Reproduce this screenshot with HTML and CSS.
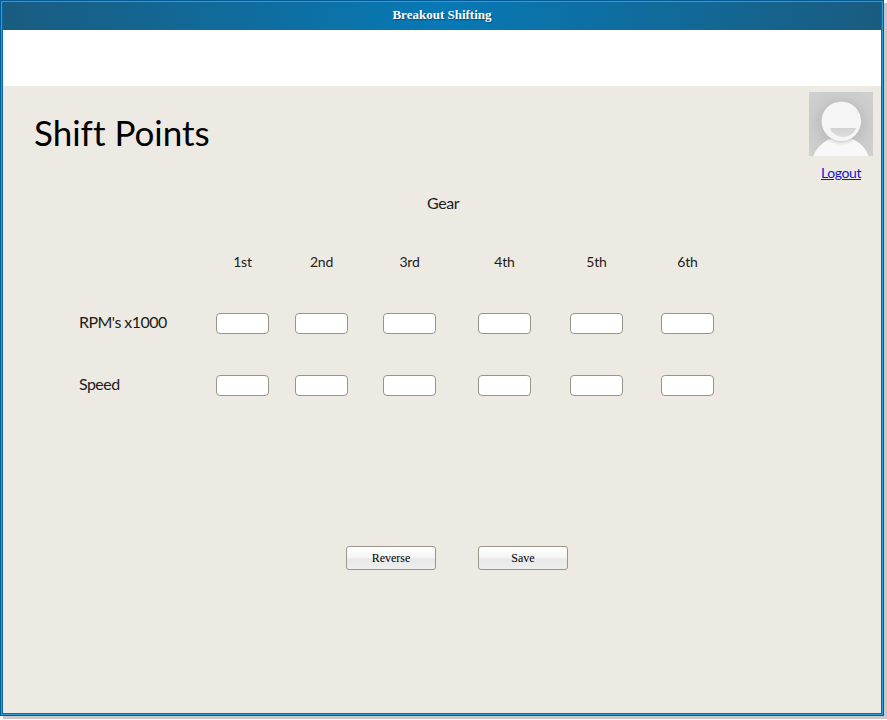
FILE: index.html
```html
<!DOCTYPE html>
<html lang="en">
<head>
<meta charset="utf-8">
<title>Breakout Shifting</title>
<link rel="stylesheet" href="styles.css">
</head>
<body>
<div class="window">
  <div class="frame">
    <header class="titlebar">Breakout Shifting</header>
    <div class="toolbar"></div>
    <main class="content">
      <div class="top">
        <h1>Shift Points</h1>
        <div class="user">
          <svg class="avatar" viewBox="0 0 64 64" aria-hidden="true">
            <defs>
              <radialGradient id="bg" cx=".5" cy=".5" r=".65"><stop offset=".4" stop-color="#bdbdbd"/><stop offset=".7" stop-color="#cbcbcb"/><stop offset="1" stop-color="#d0d0d0"/></radialGradient>
              <linearGradient id="mouth" x1="0" y1="0" x2="0" y2="1"><stop offset="0" stop-color="#d2d2d2"/><stop offset="1" stop-color="#dedede"/></linearGradient>
              <radialGradient id="halo"><stop offset=".82" stop-color="#bbb" stop-opacity=".6"/><stop offset="1" stop-color="#ccc" stop-opacity="0"/></radialGradient>
            </defs>
            <rect width="64" height="64" fill="url(#bg)"/>
            <path d="M4.500 64C8 53 19 45 32 45s24 8 27.500 19z" fill="#f8f8f8"/>
            <circle cx="32.300" cy="29.500" r="24" fill="url(#halo)"/>
            <circle cx="32.300" cy="29.200" r="19.800" fill="#f5f5f5"/>
            <path d="M21 36h26c-2 5.500-7 9-13 9s-11-3.500-13-9z" fill="url(#mouth)"/>
          </svg>
          <a href="#">Logout</a>
        </div>
      </div>
      <div class="caption">Gear</div>
      <div class="grid">
        <span></span><span class="gear">1st</span><span class="gear">2nd</span><span class="gear">3rd</span><span class="gear">4th</span><span class="gear">5th</span><span class="gear">6th</span>
        <span class="label">RPM's x1000</span><input type="text"><input type="text"><input type="text"><input type="text"><input type="text"><input type="text">
        <span class="label">Speed</span><input type="text"><input type="text"><input type="text"><input type="text"><input type="text"><input type="text">
      </div>
      <div class="actions"><button>Reverse</button><button>Save</button></div>
    </main>
  </div>
</div>
</body>
</html>
```
FILE: styles.css
```css
* { box-sizing: border-box; }
body { margin: 0; height: 720px; overflow: hidden; background: #fff; font-family: Lato, sans-serif; color: #1c1c1c; font-variant-ligatures: none; }
.window { width: 884px; height: 716px; border: 1px solid #005b97; box-shadow: 3px 3px 0 #c9c7c9; }
.frame { height: 714px; border: 1px solid #2f9ad8; }
.titlebar { height: 28px; padding: 1px 0 0; border: solid #0a6aa8; border-width: 0 1px; background: linear-gradient(90deg, #1a5c80, #0779b5 50%, #1a5c80); color: #fff; font: bold 13px/24px "Liberation Serif", serif; text-align: center; text-shadow: 1px 1px 1px #034a75; }
.toolbar { height: 56px; background: #fff; border: solid #0a6aa8; border-width: 0 1px; }
.content { height: 628px; background: #edeae3; border: solid #0a6aa8; border-width: 0 1px 1px; }
.top { display: flex; justify-content: space-between; height: 108px; padding: 6px 8px 0 31px; }
h1 { margin: 18px 0 0; font-weight: 400; font-size: 35px; line-height: 44px; color: #000; }
.user { width: 64px; text-align: center; font-size: 14px; line-height: 20px; letter-spacing: -.4px; }
.avatar { display: block; width: 64px; height: 64px; margin-bottom: 7px; }
.user a { color: #1515d0; }
.caption { margin: -1px 0 0 424px; height: 59px; font-size: 16px; line-height: 20px; letter-spacing: -.4px; }
.grid { display: grid; grid-template-columns: 137px 79px 88px 95px 92px 91px 53px; grid-template-rows: 61px 62px 21px; margin-left: 76px; }
.gear { width: 53px; text-align: center; font-size: 14px; line-height: 20px; letter-spacing: -.2px; }
.label { margin-top: -1px; font-size: 16px; line-height: 20px; letter-spacing: -.55px; }
input { width: 53px; height: 21px; padding: 0 3px; border: 1px solid #98948a; border-radius: 4px; background: #fff; }
.actions { display: flex; gap: 42px; margin: 150px 0 0 343px; }
button { width: 90px; height: 24px; padding: 0; border: 1px solid #9b9688; border-radius: 3px; background: linear-gradient(#fff, #f4f4f4 48%, #e9e9e9 55%, #eee); font: 12px "Liberation Serif", serif; color: #000; }
```
